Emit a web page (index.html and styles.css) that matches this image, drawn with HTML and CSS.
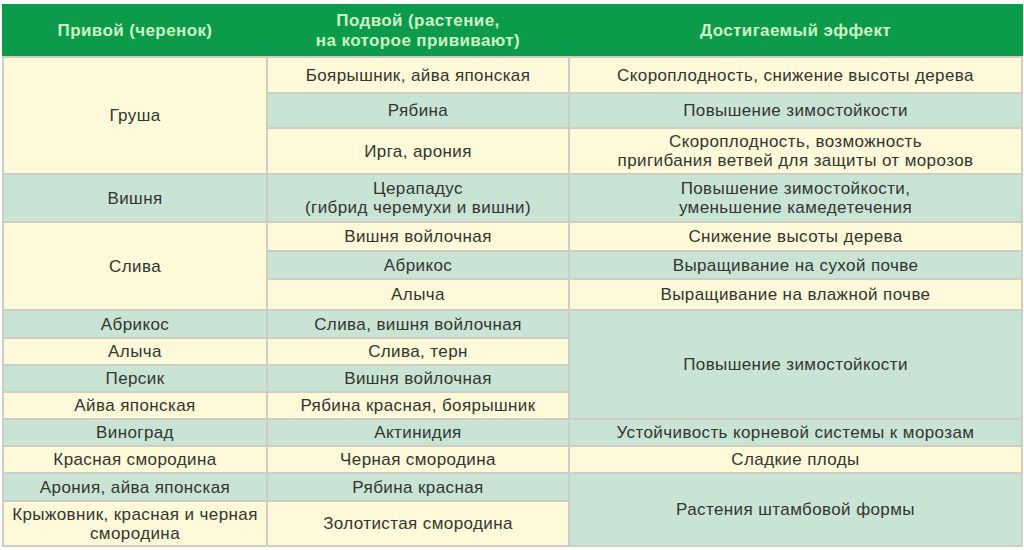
FILE: index.html
```html
<!DOCTYPE html>
<html lang="ru">
<head>
<meta charset="utf-8">
<link rel="stylesheet" href="styles.css">
</head>
<body>
<div class="wrap">
<table class="grid">
  <colgroup>
    <col class="c1"><col class="c2"><col class="c3">
  </colgroup>
  <thead>
    <tr class="h-head">
      <th>Привой (черенок)</th>
      <th>Подвой (растение,<br>на которое прививают)</th>
      <th>Достигаемый эффект</th>
    </tr>
  </thead>
  <tbody>
    <tr class="h36">
      <td class="cream" rowspan="3">Груша</td>
      <td class="cream">Боярышник, айва японская</td>
      <td class="cream">Скороплодность, снижение высоты дерева</td>
    </tr>
    <tr class="h35">
      <td class="mint">Рябина</td>
      <td class="mint">Повышение зимостойкости</td>
    </tr>
    <tr class="h46">
      <td class="cream">Ирга, арония</td>
      <td class="cream">Скороплодность, возможность<br>пригибания ветвей для защиты от морозов</td>
    </tr>
    <tr class="h48">
      <td class="mint">Вишня</td>
      <td class="mint">Церападус<br>(гибрид черемухи и вишни)</td>
      <td class="mint">Повышение зимостойкости,<br>уменьшение камедетечения</td>
    </tr>
    <tr class="h29">
      <td class="cream" rowspan="3">Слива</td>
      <td class="cream">Вишня войлочная</td>
      <td class="cream">Снижение высоты дерева</td>
    </tr>
    <tr class="h28">
      <td class="mint">Абрикос</td>
      <td class="mint">Выращивание на сухой почве</td>
    </tr>
    <tr class="h31">
      <td class="cream">Алыча</td>
      <td class="cream">Выращивание на влажной почве</td>
    </tr>
    <tr class="h28">
      <td class="mint">Абрикос</td>
      <td class="mint">Слива, вишня войлочная</td>
      <td class="mint" rowspan="4">Повышение зимостойкости</td>
    </tr>
    <tr class="h27">
      <td class="cream">Алыча</td>
      <td class="cream">Слива, терн</td>
    </tr>
    <tr class="h27">
      <td class="mint">Персик</td>
      <td class="mint">Вишня войлочная</td>
    </tr>
    <tr class="h27">
      <td class="cream">Айва японская</td>
      <td class="cream">Рябина красная, боярышник</td>
    </tr>
    <tr class="h27">
      <td class="mint">Виноград</td>
      <td class="mint">Актинидия</td>
      <td class="mint">Устойчивость корневой системы к морозам</td>
    </tr>
    <tr class="h27">
      <td class="cream">Красная смородина</td>
      <td class="cream">Черная смородина</td>
      <td class="cream">Сладкие плоды</td>
    </tr>
    <tr class="h28">
      <td class="mint">Арония, айва японская</td>
      <td class="mint">Рябина красная</td>
      <td class="mint" rowspan="2">Растения штамбовой формы</td>
    </tr>
    <tr class="h45">
      <td class="cream">Крыжовник, красная и черная<br>смородина</td>
      <td class="cream">Золотистая смородина</td>
    </tr>
  </tbody>
</table>
</div>
</body>
</html>
```

FILE: styles.css
```css
html, body {
  margin: 0;
  padding: 0;
  background: #ffffff;
}

.wrap {
  padding: 4px 0 0 2px;
}

.grid {
  width: 1019px;
  table-layout: fixed;
  border-collapse: collapse;
  font-family: "Liberation Sans", Arial, sans-serif;
  font-size: 17px;
  letter-spacing: 0.4px;
  line-height: 19px;
  color: #34352f;
  border: 2px solid #d3d5ce;
}

.c1 { width: 264px; }
.c2 { width: 302px; }
.c3 { width: 453px; }

.grid th,
.grid td {
  text-align: center;
  vertical-align: middle;
  padding: 0 2px;
  border: 2px solid #cdcfc7;
  white-space: nowrap;
}

.grid th {
  background: #0b9b4a;
  color: #cdf2c6;
  font-weight: bold;
  border-color: #0b9b4a;
  border-left: 2px solid #86cf9e;
  border-bottom-color: #cdcfc7;
  line-height: 20px;
}

.grid th:first-child {
  border-left-color: #0b9b4a;
}

.h-head { height: 52px; }
.h36 { height: 36px; }
.h35 { height: 35px; }
.h46 { height: 46px; }
.h48 { height: 48px; }
.h29 { height: 29px; }
.h28 { height: 28px; }
.h31 { height: 31px; }
.h27 { height: 27px; }
.h45 { height: 45px; }

.cream { background: #fdf9d9; }
.mint { background: #c9e4d5; }
```
